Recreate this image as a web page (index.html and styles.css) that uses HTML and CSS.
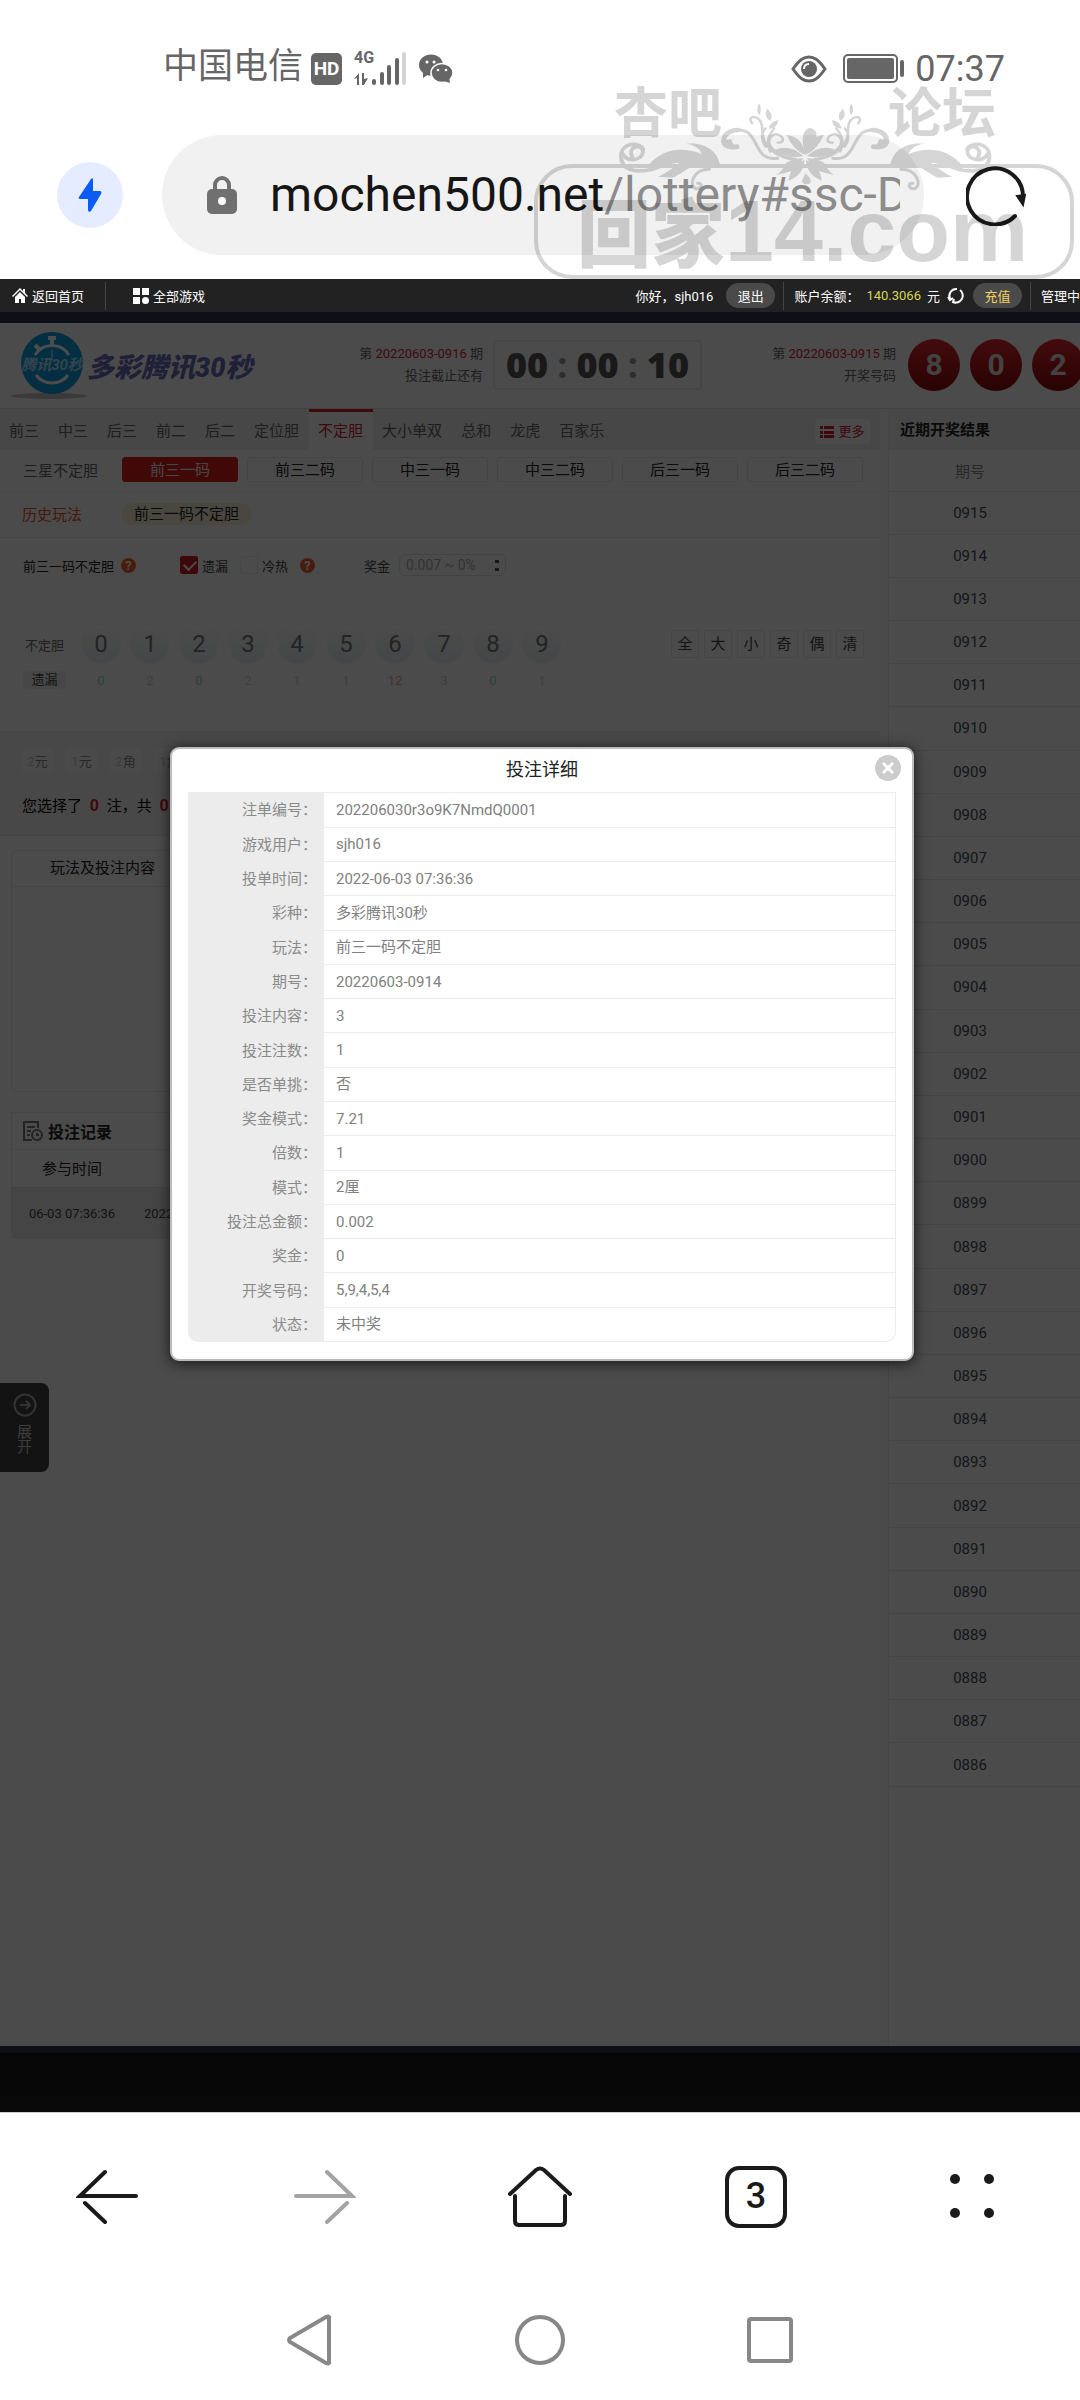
FILE: index.html
```html
<!DOCTYPE html>
<html lang="zh-CN">
<head>
<meta charset="utf-8">
<meta name="viewport" content="width=device-width">
<title>多彩腾讯30秒</title>
<link rel="stylesheet" href="styles.css">
</head>
<body>
<div class="page">
  <header class="browser">
    <div class="status">
      <span class="carrier">中国电信</span>
      <span class="hd">HD</span>
      <span class="signal">
        <span class="gen">4G</span>
        <svg width="54" height="36" viewBox="0 0 54 36" fill="#666">
          <path d="M0 28l5-6v12H3v-7zM8 22h2v6l4-1-4 7H8z"/>
          <rect x="18" y="28" width="4" height="6" rx="2"/><rect x="26" y="21" width="4" height="13" rx="2"/>
          <rect x="33" y="14" width="4" height="20" rx="2"/><rect x="41" y="7" width="4" height="27" rx="2"/>
          <rect x="48" y="1" width="4" height="33" rx="2" fill="#d4d4d4"/>
        </svg>
      </span>
      <svg class="wechat" width="34" height="30" viewBox="0 0 34 30">
        <g fill="#666"><ellipse cx="12" cy="11" rx="12" ry="10.500"/><path d="M4 17l0 7 6-4z"/></g>
        <g fill="#666" stroke="#fff" stroke-width="1.500"><ellipse cx="23" cy="19" rx="11" ry="9.500"/></g>
        <path fill="#666" d="M25 27l6 2-1-6z"/>
        <g fill="#fff"><circle cx="8" cy="8" r="1.500"/><circle cx="15" cy="8" r="1.500"/><circle cx="19" cy="16" r="1.300"/><circle cx="27" cy="16" r="1.300"/></g>
      </svg>
      <svg class="eye" width="36" height="30" viewBox="0 0 36 30">
        <path d="M2 15C9 5 13 3 18 3s9 2 16 12C27 25 23 27 18 27S9 25 2 15z" fill="none" stroke="#666" stroke-width="3"/>
        <circle cx="18" cy="15" r="8" fill="#666"/><path d="M13 15c0-3 2-5 5-5" fill="none" stroke="#fff" stroke-width="2"/>
      </svg>
      <svg class="battery" width="62" height="30" viewBox="0 0 62 30">
        <rect x="1" y="1" width="53" height="27" rx="4" fill="none" stroke="#666" stroke-width="2"/>
        <rect x="4" y="4" width="47" height="21" rx="2" fill="#666"/><rect x="57" y="6" width="4" height="17" rx="2" fill="#666"/>
      </svg>
      <span class="time">07:37</span>
    </div>
    <div class="address">
      <button class="bolt" aria-label="加速">
        <svg width="24" height="34" viewBox="0 0 24 34"><path d="M13 1L1 19c-1 1 0 2 1 2h8l0 11c0 2 2 2 3 1l10-17c1-2 0-3-1-3h-7V2c0-2-1-2-2-1z" fill="#0a5cf5"/></svg>
      </button>
      <div class="url">
        <svg width="30" height="40" viewBox="0 0 30 40"><path d="M8 17V10a7 7 0 0 1 14 0v7" fill="none" stroke="#707070" stroke-width="4"/><rect y="14" width="30" height="25" rx="5" fill="#707070"/><circle cx="15" cy="26" r="4" fill="#fff"/></svg>
        <div class="url-text">mochen500.net<span>/lottery#ssc-D</span></div>
      </div>
      <button class="reload" aria-label="刷新">
        <svg width="60" height="62" viewBox="0 0 60 62"><path d="M49 52A28 28 0 1 1 57 33" fill="none" stroke="#1a1a1a" stroke-width="4" stroke-linecap="round"/><path d="M51 32l8-1-2 10z" fill="#1a1a1a" stroke="#1a1a1a" stroke-width="2"/></svg>
      </button>
    </div>
    <div class="watermark" aria-hidden="true">
      <svg width="540" height="280" viewBox="0 0 540 280">
        <defs>
          <g id="flourish">
            <g fill="none" stroke="#000" stroke-linecap="round">
              <path stroke-width="11" d="M268 470C250 440 300 428 299 456C296 482 255 488 240 462M300 448C290 425 235 425 235 470C238 520 300 525 370 490C410 472 460 495 520 495"/>
              <path stroke-width="9" d="M492 508C445 508 430 555 452 566C472 567 472 547 458 550"/>
              <path stroke-width="14" d="M572 440C520 450 520 392 575 390"/>
              <path stroke-width="9" d="M575 390C640 388 615 485 690 475"/>
              <path stroke-width="7" d="M616 370C595 345 645 340 645 385C645 430 670 465 730 478M690 428C720 430 700 395 678 404C645 425 680 470 745 478M655 440C635 410 650 390 655 385M668 455C655 420 665 405 680 385"/>
            </g>
            <path d="M315 495C360 445 410 440 470 462C462 442 445 434 425 431C480 425 518 455 523 497L440 500C420 510 405 525 385 533L343 530C365 520 385 505 405 488C370 490 345 502 315 495zM525 420Q527 455 578 445Q560 440 556 418zM637 310Q645 330 637 346Q625 330 637 310zM660 326Q680 345 668 362Q648 350 660 326zM692 360Q690 385 664 386Q668 365 692 360zM716 404Q765 412 770 465Q735 450 716 404zM680 450Q725 430 765 468Q720 480 680 450zM715 488Q740 475 765 475L740 510Q710 520 686 525Q705 512 715 488zM768 480Q765 525 722 542Q725 500 768 480z"/>
          </g>
        </defs>
        <g transform="scale(.3444 .3333)">
          <use href="#flourish"/><use href="#flourish" transform="translate(1540 0) scale(-1 1)"/>
          <path d="M770 462Q755 415 770 392Q785 375 802 395Q808 425 770 462zM770 520Q790 535 785 550Q770 558 760 545z"/>
        </g>
      </svg>
      <div class="frame"></div>
      <span class="wm-left">杏吧</span>
      <span class="wm-right">论坛</span>
      <span class="wm-site"><b>回家</b>14.com</span>
    </div>
  </header>

  <main class="site">
    <nav class="topbar">
      <a href="#" class="home"><svg width="16" height="15" viewBox="0 0 16 15" fill="#fff"><path d="M8 0L0 8l1 1 7-7 7 7 1-1-3-3V1h-2v2zM3 9l5-5 5 5v6H9v-4H7v4H3z"/></svg>返回首页</a>
      <i class="sep"></i>
      <a href="#" class="all"><svg width="16" height="16" viewBox="0 0 16 16" fill="#fff"><path d="M0 0h7v7H0zM9 0h7v7H9zM0 9h7v7H0z"/><circle cx="12.500" cy="12.500" r="3.500"/></svg>全部游戏</a>
      <div class="account">
        <span>你好，sjh016</span>
        <button class="pill">退出</button>
        <i class="sep"></i>
        <span>账户余额：</span><span class="money">140.3066</span><span>元</span>
        <svg class="sync" width="18" height="18" viewBox="0 0 18 18" fill="none" stroke="#fff" stroke-width="2"><path d="M3 12A7 7 0 0 1 10 2M6 15A7 7 0 0 0 13 3M1 10l2 3 3-2M9 16l-3-1 1-3"/></svg>
        <button class="pill gold">充值</button>
        <i class="sep"></i>
        <a href="#">管理中</a>
      </div>
    </nav>
    <div class="strip"></div>
    <section class="draw">
      <svg class="badge" width="76" height="70" viewBox="0 0 76 70">
        <ellipse cx="38" cy="66" rx="38" ry="3" fill="#999" opacity=".6"/>
        <circle cx="41" cy="33" r="31" fill="#0e9ee0"/>
        <g fill="none" stroke="#fff" stroke-width="3"><path d="M24 25A20 20 0 0 1 58 25M25 45A20 20 0 0 0 57 45"/><path d="M41 8v7M24 15l5 5M37 8h8" stroke-width="4"/><path d="M41 20v10" stroke-width="1"/></g>
        <text x="41" y="40" class="badge-text">腾讯30秒</text>
      </svg>
      <h1>多彩腾讯30秒</h1>
      <p class="period">第 <em>20220603-0916</em> 期<br>投注截止还有</p>
      <div class="clock"><b>00</b><i>:</i><b>00</b><i>:</i><b>10</b></div>
      <p class="period last">第 <em>20220603-0915</em> 期<br>开奖号码</p>
      <div class="result"><b>8</b><b>0</b><b>2</b></div>
    </section>

    <div class="columns">
      <div class="play">
        <nav class="tabs">
          <a href="#">前三</a><a href="#">中三</a><a href="#">后三</a><a href="#">前二</a><a href="#">后二</a><a href="#">定位胆</a><a href="#" class="on">不定胆</a><a href="#">大小单双</a><a href="#">总和</a><a href="#">龙虎</a><a href="#">百家乐</a>
          <button class="more"><svg width="14" height="12" viewBox="0 0 14 12" fill="#d0202c"><path d="M0 0h3v3H0zM4 0h10v3H4zM0 5h3v3H0zM4 5h10v3H4zM0 9h3v3H0zM4 9h10v3H4z"/></svg>更多</button>
        </nav>
        <div class="modes">
          <span>三星不定胆</span>
          <button class="on">前三一码</button><button>前三二码</button><button>中三一码</button><button>中三二码</button><button>后三一码</button><button>后三二码</button>
        </div>
        <div class="history"><span>历史玩法</span><button>前三一码不定胆</button></div>
        <div class="board">
          <div class="options">
            <span>前三一码不定胆</span><i class="help">?</i>
            <label class="tick first"><input type="checkbox" checked>遗漏</label>
            <label class="tick"><input type="checkbox">冷热</label><i class="help gap">?</i>
            <label class="bonus">奖金 <select><option>0.007 ~ 0%</option></select></label>
          </div>
          <div class="balls">
            <span class="name">不定胆</span>
            <div class="set"><button>0</button><button>1</button><button>2</button><button>3</button><button>4</button><button>5</button><button>6</button><button>7</button><button>8</button><button>9</button></div>
            <div class="quick"><button>全</button><button>大</button><button>小</button><button>奇</button><button>偶</button><button>清</button></div>
          </div>
          <div class="miss">
            <span class="name">遗漏</span>
            <div class="set"><span class="low">0</span><span>2</span><span class="low">0</span><span>2</span><span>1</span><span>1</span><span class="high">12</span><span>3</span><span class="low">0</span><span>1</span></div>
          </div>
        </div>
        <div class="bet">
          <div class="units"><button><i>2</i>元</button><button><i>1</i>元</button><button><i>2</i>角</button><button><i>1</i>角</button></div>
          <p>您选择了 <b>0</b> 注，共 <b>0</b> 元</p>
        </div>
        <section class="slip"><h2>玩法及投注内容</h2></section>
        <section class="records">
          <h2><svg width="20" height="20" viewBox="0 0 20 20" fill="none" stroke="#777" stroke-width="2"><path d="M15 7V1H1v18h8M4 6h8M4 10h4M4 14h3"/><circle cx="14" cy="14" r="5"/><path d="M14 12v2h2"/></svg>投注记录</h2>
          <table>
            <thead><tr><th>参与时间</th><th></th></tr></thead>
            <tbody><tr><td>06-03 07:36:36</td><td class="issue">20220603-0914</td></tr></tbody>
          </table>
        </section>
      </div>
      <aside class="recent">
        <h2>近期开奖结果</h2>
        <table>
          <thead><tr><th>期号</th><th></th></tr></thead>
          <tbody>
            <tr><td>0915</td><td></td></tr><tr><td>0914</td><td></td></tr><tr><td>0913</td><td></td></tr><tr><td>0912</td><td></td></tr><tr><td>0911</td><td></td></tr>
            <tr><td>0910</td><td></td></tr><tr><td>0909</td><td></td></tr><tr><td>0908</td><td></td></tr><tr><td>0907</td><td></td></tr><tr><td>0906</td><td></td></tr>
            <tr><td>0905</td><td></td></tr><tr><td>0904</td><td></td></tr><tr><td>0903</td><td></td></tr><tr><td>0902</td><td></td></tr><tr><td>0901</td><td></td></tr>
            <tr><td>0900</td><td></td></tr><tr><td>0899</td><td></td></tr><tr><td>0898</td><td></td></tr><tr><td>0897</td><td></td></tr><tr><td>0896</td><td></td></tr>
            <tr><td>0895</td><td></td></tr><tr><td>0894</td><td></td></tr><tr><td>0893</td><td></td></tr><tr><td>0892</td><td></td></tr><tr><td>0891</td><td></td></tr>
            <tr><td>0890</td><td></td></tr><tr><td>0889</td><td></td></tr><tr><td>0888</td><td></td></tr><tr><td>0887</td><td></td></tr><tr><td>0886</td><td></td></tr>
          </tbody>
        </table>
      </aside>
    </div>
    <div class="base"></div>
    <button class="expand"><svg width="24" height="24" viewBox="0 0 24 24" fill="none" stroke="#aaa" stroke-width="2"><circle cx="12" cy="12" r="10.500"/><path d="M7 12h9M13 8l4 4-4 4"/></svg><span>展<br>开</span></button>

    <div class="overlay"></div>
    <section class="dialog" role="dialog" aria-label="投注详细">
      <header><h2>投注详细</h2>
        <button class="close" aria-label="关闭"><svg width="12" height="12" viewBox="0 0 12 12"><path d="M1 1l10 10M11 1L1 11" stroke="#fff" stroke-width="3"/></svg></button>
      </header>
      <table>
        <tr><th>注单编号：</th><td>202206030r3o9K7NmdQ0001</td></tr>
        <tr><th>游戏用户：</th><td>sjh016</td></tr>
        <tr><th>投单时间：</th><td>2022-06-03 07:36:36</td></tr>
        <tr><th>彩种：</th><td>多彩腾讯30秒</td></tr>
        <tr><th>玩法：</th><td>前三一码不定胆</td></tr>
        <tr><th>期号：</th><td>20220603-0914</td></tr>
        <tr><th>投注内容：</th><td>3</td></tr>
        <tr><th>投注注数：</th><td>1</td></tr>
        <tr><th>是否单挑：</th><td>否</td></tr>
        <tr><th>奖金模式：</th><td>7.21</td></tr>
        <tr><th>倍数：</th><td>1</td></tr>
        <tr><th>模式：</th><td>2厘</td></tr>
        <tr><th>投注总金额：</th><td>0.002</td></tr>
        <tr><th>奖金：</th><td>0</td></tr>
        <tr><th>开奖号码：</th><td>5,9,4,5,4</td></tr>
        <tr><th>状态：</th><td>未中奖</td></tr>
      </table>
    </section>
  </main>

  <nav class="toolbar">
    <button aria-label="后退"><svg width="64" height="64" viewBox="0 0 64 64" fill="none" stroke="#1a1a1a" stroke-width="4" stroke-linecap="round"><path d="M29 7L4 31h56M9 38l20 19"/></svg></button>
    <button aria-label="前进"><svg width="64" height="64" viewBox="0 0 64 64" fill="none" stroke="#a3a3a3" stroke-width="4" stroke-linecap="round"><path d="M35 7l25 24H4M55 38L35 57"/></svg></button>
    <button aria-label="主页"><svg width="68" height="64" viewBox="0 0 68 64" fill="none" stroke="#1a1a1a" stroke-width="4" stroke-linecap="round"><path d="M4 29L30 5q4-3 8 0l26 24M9 31v25q0 4 4 4h42q4 0 4-4V31"/></svg></button>
    <button aria-label="标签页"><span class="count">3</span></button>
    <button aria-label="菜单"><svg width="48" height="48" viewBox="0 0 48 48" fill="#1a1a1a"><circle cx="7" cy="6" r="5"/><circle cx="41" cy="6" r="5"/><circle cx="7" cy="40" r="5"/><circle cx="41" cy="40" r="5"/></svg></button>
  </nav>
  <nav class="system">
    <button aria-label="返回"><svg width="52" height="52" viewBox="0 0 52 52"><path d="M45 3v46q-1 1-3 0L6 28q-2-2 0-4L42 3q2-1 3 0z" fill="none" stroke="#888" stroke-width="4"/></svg></button>
    <button aria-label="桌面"><svg width="52" height="52" viewBox="0 0 52 52"><circle cx="26" cy="26" r="23" fill="none" stroke="#888" stroke-width="4"/></svg></button>
    <button aria-label="最近任务"><svg width="52" height="52" viewBox="0 0 52 52"><rect x="5" y="5" width="42" height="42" rx="2" fill="none" stroke="#888" stroke-width="4"/></svg></button>
  </nav>
</div>
</body>
</html>
```
FILE: styles.css
```css
* { box-sizing: border-box; }
body, h1, h2, p { margin: 0; }
body { font-family: Roboto, "Noto Sans CJK SC", sans-serif; font-size: 15px; color: #222; background: #fff; }
button, select, input { font: inherit; color: inherit; margin: 0; padding: 0; border: 0; background: none; }
a { color: inherit; text-decoration: none; }
i, em { font-style: normal; }
svg { display: block; flex: none; }
table { border-collapse: collapse; width: 100%; table-layout: fixed; }
th, td { padding: 0; font-weight: 400; }
.page { display: flex; flex-direction: column; min-height: 100vh; overflow: hidden; }

/* phone status bar and address bar */
.browser { position: relative; }
.status { display: flex; align-items: center; height: 138px; padding: 0 75px 0 163px; color: #666; }
.carrier { font-size: 35px; line-height: 48px; padding-bottom: 4px; }
.hd { margin-left: 8px; width: 31px; height: 32px; border-radius: 5px; background: #666; color: #fff; font-size: 19px; font-weight: 700; line-height: 32px; text-align: center; }
.signal { position: relative; margin-left: 12px; }
.gen { position: absolute; left: 0; top: -3px; font-size: 16px; line-height: 20px; font-weight: 700; }
.wechat { margin-left: 11px; }
.eye { margin-left: auto; }
.battery { margin: 0 10px 0 16px; }
.time { font-size: 36px; }
.address { display: flex; align-items: center; margin-top: -3px; padding: 0 54px 24px 57px; }
.bolt { display: grid; place-items: center; width: 66px; height: 66px; border-radius: 50%; background: #e5ecff; }
.url { display: flex; align-items: center; flex: 1; min-width: 0; height: 120px; margin: 0 42px 0 39px; padding: 0 24px 0 45px; gap: 33px; border-radius: 60px; background: #f1f1f1; }
.url-text { overflow: hidden; white-space: nowrap; font-size: 48px; line-height: 60px; color: #161616; }
.url-text span { color: #8c8c8c; }
.watermark { position: absolute; right: 0; top: 0; width: 540px; height: 280px; opacity: .16; pointer-events: none; color: #000; font-family: "Liberation Sans", "Noto Sans CJK SC", sans-serif; font-weight: 700; white-space: nowrap; }
.frame { position: absolute; left: -6px; top: 164px; width: 540px; height: 115px; border: 4px solid #000; border-radius: 38px; }
.wm-left, .wm-right { position: absolute; left: 74px; top: 84px; font-size: 54px; line-height: 60px; }
.wm-right { left: 348px; }
.wm-site { position: absolute; left: 37px; top: 182px; font-size: 88px; line-height: 98px; }
.wm-site b { font-size: 74px; }

/* site */
.site { position: relative; flex: 1; display: flex; flex-direction: column; background: #fcfcfc; }
.topbar { display: flex; align-items: center; height: 33px; padding-left: 12px; background: #222; color: #fff; font-size: 13px; white-space: nowrap; }
.topbar a { display: flex; align-items: center; gap: 4px; }
.sep { width: 1px; height: 28px; background: #444; }
.home + .sep { margin: 0 27px 0 21px; }
.account { display: flex; align-items: center; margin-left: auto; }
.pill { width: 49px; height: 25px; margin-left: 13px; border-radius: 13px; background: #4a4a4a; }
.account .sep { margin: 0 10px 0 8px; }
.money { margin: 0 6px 0 7px; color: #d8d35a; }
.sync { margin: 0 -5px 0 7px; }
.gold { color: #f2d35e; }
.strip { height: 11px; background: #28364a; }
.draw { display: flex; align-items: center; height: 86px; padding: 0 0 2px 11px; border-bottom: 1px solid #ddd; white-space: nowrap; }
.badge-text { font-size: 15px; font-weight: 700; font-style: italic; text-anchor: middle; fill: #aee4ff; }
h1 { margin-top: 6px; width: 168px; font-size: 27px; line-height: 32px; font-style: italic; font-weight: 900; color: #6a6cb8; }
.period { width: 130px; margin-left: 98px; font-size: 13px; line-height: 22px; text-align: right; color: #666; }
.period em { color: #d8202c; }
.clock { display: flex; justify-content: space-between; align-items: center; width: 209px; height: 50px; margin-left: 10px; padding: 0 11px; border: 2px solid #e6e6e6; border-radius: 4px; font: 700 36px/44px "Noto Sans", sans-serif; color: #555; }
.clock i { color: #999; }
.period.last { margin-left: auto; }
.result { display: flex; gap: 10px; margin: 0 -4px 0 12px; }
.result b { width: 52px; height: 52px; border-radius: 50%; background: linear-gradient(#e0252b, #8c0a0a); color: #dcdcdc; font-size: 30px; line-height: 52px; text-align: center; }
.columns { display: flex; flex: 1; }
.play { flex: 1; border-right: 8px solid #f8f8f8; min-width: 0; }
.tabs { display: flex; height: 41px; background: #ededed; color: #666; line-height: 42px; }
.tabs a { padding: 1px 10px 0 9px; }
.tabs .on { padding-top: 0; border-top: 3px solid #d0202c; background: #fcfcfc; color: #d0202c; line-height: 38px; }
.more { display: flex; align-items: center; justify-content: center; gap: 4px; width: 55px; height: 25px; margin: 10px 10px 0 auto; border-radius: 4px; background: #fcfcfc; color: #d0202c; font-size: 13px; }
.modes { display: flex; align-items: center; gap: 9px; height: 42px; padding: 0 17px 2px 23px; border-bottom: 1px solid #f0f0f0; color: #666; }
.modes span { width: 90px; }
.modes button { flex: 1; height: 25px; border: 1px solid #e3e3e3; border-radius: 3px; color: #222; line-height: 20px; }
.modes .on { background: #d8201d; border-color: #d8201d; color: #eee; }
.history { display: flex; align-items: center; gap: 39px; height: 46px; padding: 0 0 2px 22px; border-bottom: 1px solid #e6e6e6; color: #e8512f; }
.history button { width: 131px; height: 22px; border-radius: 11px; background: #f3efd8; color: #222; line-height: 20px; }
.board { padding: 16px 16px 42px 23px; border-bottom: 1px solid #e6e6e6; font-size: 13px; }
.options { display: flex; align-items: center; height: 22px; }
.help { width: 15px; height: 15px; margin-left: 7px; border-radius: 50%; background: #f0602a; color: #fff; font-weight: 700; line-height: 15px; text-align: center; }
.tick { display: flex; align-items: center; gap: 4px; margin-left: 12px; color: #444; }
.tick.first { margin-left: 44px; }
.tick input { appearance: none; width: 18px; height: 18px; border: 1px solid #ececec; border-radius: 2px; }
.tick input:checked { border-color: #d01c22; background: #d01c22; }
.tick input:checked::after { content: ""; display: block; width: 10px; height: 6px; margin: 3px; border: solid #fff; border-width: 0 0 2px 2px; transform: rotate(-45deg); }
.help.gap { margin-left: 12px; }
.bonus { display: flex; align-items: center; gap: 9px; margin-left: 49px; color: #444; }
.bonus select { appearance: none; width: 107px; height: 22px; padding-left: 6px; border: 1px solid #e0e0e0; border-radius: 6px; font-size: 14px; color: #aaa; background: linear-gradient(#555, #555) right 6px top 5px / 4px 3px no-repeat, linear-gradient(#555, #555) right 6px top 13px / 4px 3px no-repeat; }
.balls { display: flex; align-items: center; margin-top: 49px; color: #666; }
.name { width: 43px; text-align: center; }
.set { display: flex; gap: 11px; margin-left: 16px; }
.set button { width: 38px; height: 38px; border-radius: 50%; background: linear-gradient(#fbfbfb, #e6ebef); box-shadow: 0 0 2px #ddd; color: #777; font-size: 24px; }
.quick { display: flex; gap: 5px; margin-left: auto; }
.quick button { width: 28px; height: 28px; border: 1px solid #e6e6e6; border-radius: 2px; font-size: 15px; line-height: 20px; color: #444; }
.miss { display: flex; align-items: center; margin-top: 8px; color: #d0d0d0; }
.miss .name { height: 18px; border-radius: 4px; background: #eee; color: #444; line-height: 18px; }
.miss .set span { width: 38px; text-align: center; }
.miss .set .low { color: #a5cdb0; }
.miss .set .high { color: #dba7a7; }
.bet { height: 104px; padding: 16px 22px 0; background: #f2f2f2; border-bottom: 1px solid #e6e6e6; }
.units { display: flex; gap: 13px; }
.units button { width: 31px; height: 25px; border-radius: 4px; background: #f9f9f9; color: #888; font-size: 13px; }
.units i { color: #ccc; }
.bet p { margin-top: 21px; line-height: 24px; color: #000; }
.bet b { margin: 0 4px; color: #d8202c; font-size: 16px; }
h2 { font-size: 15px; }
.slip { height: 242px; margin: 14px 12px 0 11px; border: 1px solid #e6e6e6; border-radius: 6px; }
.slip h2 { height: 36px; padding-left: 38px; border-bottom: 1px solid #e6e6e6; font-weight: 400; line-height: 34px; }
.records { margin: 20px 12px 0 11px; border: 1px solid #e6e6e6; border-bottom: 0; }
.records h2 { display: flex; align-items: center; gap: 5px; height: 37px; padding-left: 11px; border-bottom: 1px solid #e6e6e6; font-size: 16px; }
.records th { height: 37px; padding-bottom: 2px; border-bottom: 1px solid #ddd; }
.records th:first-child { width: 120px; }
.records td { height: 52px; background: #e6e6e6; color: #444; font-size: 13px; text-align: center; }
.records .issue { padding-left: 12px; text-align: left; }
.recent { width: 192px; border-left: 1px solid #e6e6e6; }
.recent h2 { height: 41px; padding-left: 11px; background: #ededed; line-height: 42px; }
.recent table { height: 1337px; }
.recent th, .recent td { border-bottom: 1px solid #e3e3e3; color: #444b55; text-align: center; }
.recent th { height: 41px; }
.recent td { height: 43px; }
.recent th:first-child { width: 162px; color: #888; }
.base { height: 66px; border-top: 7px solid #28364a; background: linear-gradient(#171717 43px, #202020 0); }
.expand { position: absolute; left: 0; top: 1104px; display: flex; flex-direction: column; align-items: center; width: 49px; height: 89px; padding-top: 10px; gap: 8px; border-radius: 0 8px 8px 0; background: #404040; color: #ccc; line-height: 15px; }
.overlay { position: absolute; inset: 33px 0 0; background: rgba(0, 0, 0, .7); }

/* bet detail dialog */
.dialog { position: absolute; left: 170px; right: 166px; top: 468px; height: 614px; padding: 0 16px; border: 2px solid #bbb; border-radius: 9px; background: #fff; box-shadow: 0 2px 14px rgba(0, 0, 0, .7); }
.dialog header { position: relative; height: 43px; }
.dialog h2 { font-size: 18px; line-height: 42px; font-weight: 400; text-align: center; }
.close { position: absolute; right: -5px; top: 6px; display: grid; place-items: center; width: 26px; height: 26px; border-radius: 50%; background: #ccc; }
.dialog table { height: 550px; border-collapse: separate; border-spacing: 0; }
.dialog th { width: 136px; padding-right: 7px; background: #ececec; text-align: right; color: #8a8a8a; }
.dialog td { padding-left: 12px; border: solid #ececec; border-width: 0 1px 1px 0; color: #808080; }
.dialog th, .dialog td { line-height: 22px; }
.dialog tr:first-child td { border-top-width: 1px; }
.dialog tr:last-child th { border-bottom-left-radius: 10px; }
.dialog tr:last-child td { border-bottom-right-radius: 10px; }

/* browser and system navigation */
.toolbar { display: flex; height: 169px; border-top: 1px solid #ccc; }
.toolbar button, .system button { flex: 1; display: grid; place-items: center; }
.count { width: 62px; height: 62px; border: 4px solid #1a1a1a; border-radius: 14px; font-size: 36px; font-weight: 500; line-height: 53px; color: #1a1a1a; }
.system { display: flex; height: 119px; padding: 0 18% 2px; }
```
